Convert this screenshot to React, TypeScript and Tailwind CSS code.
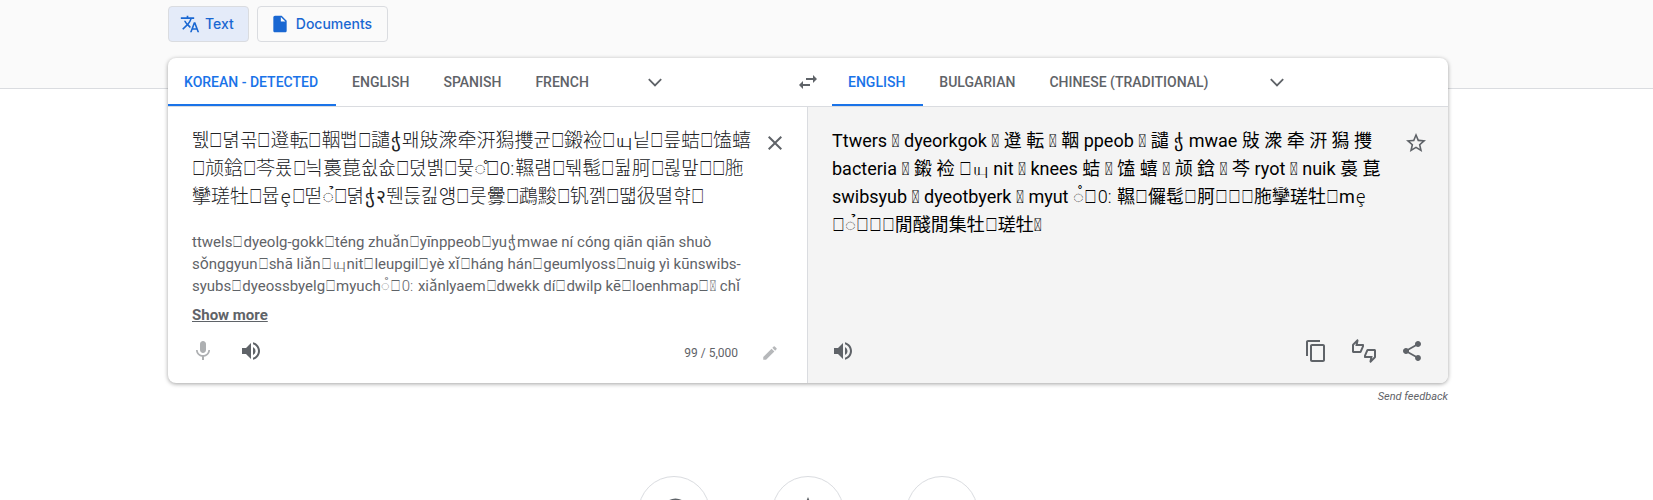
import type { ReactNode } from "react";
import {
  MdClose,
  MdContentCopy,
  MdEdit,
  MdHistory,
  MdInsertDriveFile,
  MdMic,
  MdOutlineThumbsUpDown,
  MdPeople,
  MdShare,
  MdStar,
  MdStarBorder,
  MdSwapHoriz,
  MdTranslate,
  MdVolumeUp,
} from "react-icons/md";

const SOURCE = [
  "뛠⎕뎕곢⎕邆転⎕鞇뻡⎕譴ჭ뫠㪒潨牵汧獡㩳균⎕鎩裣⎕யு닡⎕릎蛣⎕馌蟢",
  "⎕颃鋡⎕芩룠⎕늭裛菎쉾슚⎕뎠볡⎕뮻◌̊⎕0:韅럠⎕뒊髢⎕뒲胢⎕뢶맢⎕⎕胣",
  "攣瑳牡⎕뮵ȩ⎕떧◌̉⎕뎕ჭ२뛘듡킲얭⎕룻釁⎕鵡黢⎕钒껡⎕떏彶뗠햒⎕",
];

const ROMANIZED = [
  "ttwels⎕dyeolg-gokk⎕téng zhuǎn⎕yīnppeob⎕yuჭmwae ní cóng qiān qiān shuò",
  "sǒnggyun⎕shā liǎn⎕யுnit⎕leupgil⎕yè xǐ⎕háng hán⎕geumlyoss⎕nuig yì kūnswibs-",
  "syubs⎕dyeossbyelg⎕myuch◌̊⎕0: xiǎnlyaem⎕dwekk dí⎕dwilp kē⎕loenhmap⎕\uE000 chǐ",
];

const TRANSLATED = [
  "Ttwers \uE000 dyeorkgok \uE000 邆 転 \uE000 鞇 ppeob \uE000 譴 ჭ mwae 㪒 潨 牵 汧 獡 㩳",
  "bacteria \uE000 鎩 裣 ⎕யு nit \uE000 knees 蛣 \uE000 馌 蟢 \uE000 颃 鋡 \uE000 芩 ryot \uE000 nuik 裛 菎",
  "swibsyub \uE000 dyeotbyerk \uE000 myut ◌̊⎕0: 韅⎕儸髢⎕胢⎕⎕⎕胣攣瑳牡⎕mȩ",
  "⎕◌̉⎕⎕⎕閒醆閒集牡⎕瑳牡\uE000",
];

/* Box glyphs get a pixel of air on both sides; rare script letters are set light. */
function Glyphs({ text }: { text: string }) {
  return text.split(/(⎕|ჭ|யு|0:|ȩ)/).map((part, i) => {
    if (part === "⎕") {
      return (
        <span key={i} className="px-px">
          {part}
        </span>
      );
    }
    if (part === "ჭ" || part === "யு" || part === "0:" || part === "ȩ") {
      return (
        <span key={i} className="px-px font-[Roboto,'Noto_Sans',sans-serif] leading-none font-light">
          {part}
        </span>
      );
    }
    return part;
  });
}

function Lines({ lines }: { lines: string[] }) {
  return lines.map((line) => (
    <span key={line} className="block whitespace-nowrap">
      <Glyphs text={line} />
    </span>
  ));
}

function Chevron() {
  return (
    <svg viewBox="0 0 24 24" className="size-6" fill="none" stroke="currentColor" strokeWidth="1.8" aria-hidden="true">
      <path d="M5.8 9.2 12 15.4 18.2 9.2" />
    </svg>
  );
}

function Tab({ children, active = false }: { children: ReactNode; active?: boolean }) {
  return (
    <button
      className={
        active
          ? "h-12 border-b-2 border-[#1a73e8] pt-px pr-[18px] pl-4 whitespace-nowrap text-[#1a73e8]"
          : "h-12 border-b-2 border-transparent pt-px pr-[18px] pl-4 whitespace-nowrap text-[#5f6368]"
      }
    >
      {children}
    </button>
  );
}

function IconButton({ label, children }: { label: string; children: ReactNode }) {
  return (
    <button aria-label={label} className="grid size-12 shrink-0 place-items-center text-2xl text-[#5f6368]">
      {children}
    </button>
  );
}

function Shortcut({ label, children }: { label: string; children: ReactNode }) {
  return (
    <button
      aria-label={label}
      className="grid size-[72px] place-items-center rounded-full border border-[#dadce0] text-4xl text-[#5f6368]"
    >
      {children}
    </button>
  );
}

export default function App() {
  return (
    <div className="h-screen overflow-hidden bg-white font-[Roboto,'Noto_Sans_CJK_KR','Noto_Sans_CJK_SC',sans-serif] text-[#3c4043]">
      <header className="flex gap-2 border-b border-[#dadce0] bg-[#fafafa] pt-1.5 pb-[46px] pl-[168px] font-[Inter,sans-serif] text-sm font-medium text-[#1967d2]">
        <button className="flex h-9 items-center gap-[5px] rounded border border-[#dadce0] bg-[#e4ebf9] pr-3.5 pl-[11px]">
          <MdTranslate className="text-xl" />
          Text
        </button>
        <button className="flex h-9 items-center gap-1.5 rounded border border-[#dadce0] pr-[15px] pl-3">
          <MdInsertDriveFile className="text-xl" />
          Documents
        </button>
      </header>

      <main className="relative -mt-[31px] pr-[205px] pl-[168px]">
        <section className="overflow-hidden rounded-lg bg-white shadow-[0_1px_4px_rgba(0,0,0,0.37)]">
          <nav className="flex border-b border-[#dadce0] text-sm font-medium">
            <div className="flex flex-1 items-center">
              <Tab active>KOREAN - DETECTED</Tab>
              <Tab>ENGLISH</Tab>
              <Tab>SPANISH</Tab>
              <Tab>FRENCH</Tab>
              <span className="ml-6">
                <IconButton label="More source languages">
                  <Chevron />
                </IconButton>
              </span>
            </div>
            <IconButton label="Swap languages">
              <MdSwapHoriz />
            </IconButton>
            <div className="flex flex-1 items-center">
              <Tab active>ENGLISH</Tab>
              <Tab>BULGARIAN</Tab>
              <Tab>CHINESE (TRADITIONAL)</Tab>
              <span className="ml-[27px]">
                <IconButton label="More target languages">
                  <Chevron />
                </IconButton>
              </span>
            </div>
          </nav>

          <div className="grid grid-cols-2">
            <div className="flex min-w-0 flex-col border-r border-[#dadce0] pb-2">
              <div className="flex items-start justify-between pt-3 pr-2 pl-6">
                <div className="min-w-0">
                  <p className="pt-2 font-['Liberation_Sans','Noto_Sans_CJK_KR','Noto_Sans_CJK_SC',sans-serif] text-[19px] leading-7 font-light text-[#202124]">
                    <Lines lines={SOURCE} />
                  </p>
                  <p className="pt-5 text-[15px] leading-[22px] text-[#5f6368]">
                    <Lines lines={ROMANIZED} />
                  </p>
                  <button className="mt-2 text-[15px] leading-[21px] font-bold text-[#5f6368] underline">
                    Show more
                  </button>
                </div>
                <IconButton label="Clear source text">
                  <MdClose />
                </IconButton>
              </div>
              <div className="mt-auto flex items-center pr-[13px] pl-[11px]">
                <span className="flex opacity-50">
                  <IconButton label="Translate by voice">
                    <MdMic />
                  </IconButton>
                </span>
                <IconButton label="Listen to source text">
                  <MdVolumeUp />
                </IconButton>
                <span className="mr-2 ml-auto pt-1 text-xs text-[#5f6368]">99 / 5,000</span>
                <span className="flex pt-1 opacity-45">
                  <MdEditButton />
                </span>
              </div>
            </div>

            <div className="flex min-w-0 flex-col bg-[#f4f4f4] pb-2">
              <div className="flex items-start justify-between pt-3 pr-2 pl-6">
                <p className="min-w-0 pt-2 text-lg leading-7 text-black">
                  <Lines lines={TRANSLATED} />
                </p>
                <IconButton label="Save translation">
                  <MdStarBorder />
                </IconButton>
              </div>
              <div className="mt-auto flex items-center pr-3 pl-[11px]">
                <IconButton label="Listen to translation">
                  <MdVolumeUp />
                </IconButton>
                <span className="ml-auto" />
                <IconButton label="Copy translation">
                  <MdContentCopy />
                </IconButton>
                <IconButton label="Rate this translation">
                  <MdOutlineThumbsUpDown />
                </IconButton>
                <IconButton label="Share translation">
                  <MdShare />
                </IconButton>
              </div>
            </div>
          </div>
        </section>
        <div className="flex justify-end pt-1.5">
          <a href="#feedback" className="text-[11px] leading-4 text-[#5f6368] italic">
            Send feedback
          </a>
        </div>
        <div className="flex justify-center gap-[62px] pt-[71px]">
          <Shortcut label="History">
            <MdHistory />
          </Shortcut>
          <Shortcut label="Saved">
            <MdStar />
          </Shortcut>
          <Shortcut label="Community">
            <MdPeople />
          </Shortcut>
        </div>
      </main>
    </div>
  );
}

function MdEditButton() {
  return (
    <button aria-label="Edit" className="grid h-11 w-12 shrink-0 place-items-center text-lg text-[#5f6368]">
      <MdEdit />
    </button>
  );
}
